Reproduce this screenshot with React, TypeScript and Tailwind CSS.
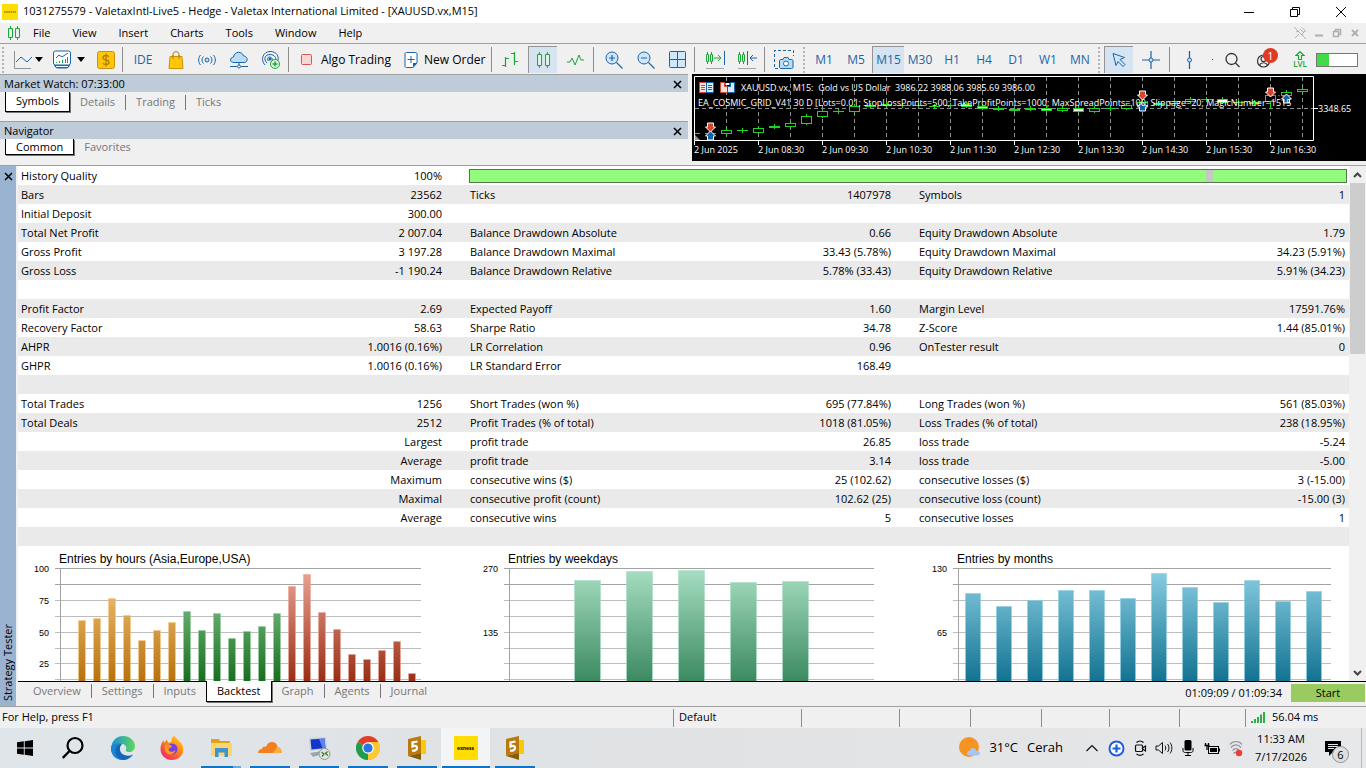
import { ReactNode } from "react";

type Row = [string, string, string, string, string, string];

const rows: Row[] = [
  ["Bars", "23562", "Ticks", "1407978", "Symbols", "1"],
  ["Initial Deposit", "300.00", "", "", "", ""],
  ["Total Net Profit", "2 007.04", "Balance Drawdown Absolute", "0.66", "Equity Drawdown Absolute", "1.79"],
  ["Gross Profit", "3 197.28", "Balance Drawdown Maximal", "33.43 (5.78%)", "Equity Drawdown Maximal", "34.23 (5.91%)"],
  ["Gross Loss", "-1 190.24", "Balance Drawdown Relative", "5.78% (33.43)", "Equity Drawdown Relative", "5.91% (34.23)"],
  ["", "", "", "", "", ""],
  ["Profit Factor", "2.69", "Expected Payoff", "1.60", "Margin Level", "17591.76%"],
  ["Recovery Factor", "58.63", "Sharpe Ratio", "34.78", "Z-Score", "1.44 (85.01%)"],
  ["AHPR", "1.0016 (0.16%)", "LR Correlation", "0.96", "OnTester result", "0"],
  ["GHPR", "1.0016 (0.16%)", "LR Standard Error", "168.49", "", ""],
  ["", "", "", "", "", ""],
  ["Total Trades", "1256", "Short Trades (won %)", "695 (77.84%)", "Long Trades (won %)", "561 (85.03%)"],
  ["Total Deals", "2512", "Profit Trades (% of total)", "1018 (81.05%)", "Loss Trades (% of total)", "238 (18.95%)"],
  ["", "Largest", "profit trade", "26.85", "loss trade", "-5.24"],
  ["", "Average", "profit trade", "3.14", "loss trade", "-5.00"],
  ["", "Maximum", "consecutive wins ($)", "25 (102.62)", "consecutive losses ($)", "3 (-15.00)"],
  ["", "Maximal", "consecutive profit (count)", "102.62 (25)", "consecutive loss (count)", "-15.00 (3)"],
  ["", "Average", "consecutive wins", "5", "consecutive losses", "1"],
  ["", "", "", "", "", ""],
];

const menus = ["File", "View", "Insert", "Charts", "Tools", "Window", "Help"];
const timeframes = ["M1", "M5", "M15", "M30", "H1", "H4", "D1", "W1", "MN"];
const testerTabs = ["Overview", "Settings", "Inputs", "Backtest", "Graph", "Agents", "Journal"];

const BLUE = "#1c65a5";
const GREEN = "#1ba636";

const Icon = ({ w = 20, h = 20, children }: { w?: number; h?: number; children: ReactNode }) => (
  <svg width={w} height={h} viewBox={`0 0 ${w} ${h}`} fill="none" className="shrink-0">
    {children}
  </svg>
);

const Sep = ({ className = "" }: { className?: string }) => (
  <span className={`h-[25px] w-px shrink-0 bg-[#8c8c8c] ${className}`} />
);

const Grip = ({ className = "" }: { className?: string }) => (
  <span className={`h-[26px] shrink-0 border-l-2 border-dotted border-[#b4b4b4] ${className}`} />
);

const Tool = ({
  label,
  className = "w-8",
  active = false,
  children,
}: {
  label: string;
  className?: string;
  active?: boolean;
  children: ReactNode;
}) => (
  <button
    aria-label={label}
    className={`flex h-[27px] shrink-0 items-center justify-center whitespace-nowrap ${
      active ? "border-l border-t border-[#949494] bg-[#d6e3f0]" : ""
    } ${className}`}
  >
    {children}
  </button>
);

const Caret = () => (
  <Icon w={8} h={5}>
    <path d="M0 0h8L4 5z" fill="#000" />
  </Icon>
);

const TitleBar = () => (
  <header className="flex h-[23px] shrink-0 items-center bg-white pl-[2px] pr-[2px]">
    <svg width="16" height="16" viewBox="0 0 16 16">
      <rect width="16" height="16" fill="#ffdd00" />
      <path d="M2 8h12" stroke="#5b5210" strokeWidth="1.2" strokeDasharray="1.6 .6" />
    </svg>
    <h1 className="ml-[5px] flex-1 text-[11px]">
      1031275579 - ValetaxIntl-Live5 - Hedge - Valetax International Limited - [XAUUSD.vx,M15]
    </h1>
    <button aria-label="Minimize" className="flex w-[46px] justify-center">
      <Icon w={10} h={10}>
        <path d="M0 5.5h10" stroke="#000" />
      </Icon>
    </button>
    <button aria-label="Restore" className="flex w-[46px] justify-center">
      <Icon w={10} h={10}>
        <path d="M.5 2.5h7v7h-7zM2.5 2.500v-2h7v7h-2" stroke="#000" />
      </Icon>
    </button>
    <button aria-label="Close" className="flex w-[46px] justify-center">
      <Icon w={10} h={10}>
        <path d="M0 0l10 10M10 0L0 10" stroke="#000" />
      </Icon>
    </button>
  </header>
);

const MenuBar = () => (
  <nav className="flex h-[21px] shrink-0 items-center border-b border-[#a0a0a0] pl-[7px] pr-[6px]">
    <Icon w={14} h={14}>
      <path d="M3.500 0v14M10.500 0v14" stroke={GREEN} />
      <path d="M1.500 2.500h4v9h-4zM8.500 2.500h4v9h-4z" fill="#e3f5e6" stroke={GREEN} />
    </Icon>
    <div className="flex pl-px">
      {menus.map((m) => (
        <button key={m} className="px-[11px] text-[11px]">
          {m}
        </button>
      ))}
    </div>
    <div className="ml-auto flex items-center gap-[8px]">
      <button aria-label="Unpin">
        <Icon w={12} h={12}>
          <path d="M0 0l12 12M1 11l4-4M6 2l4 4M8 .5L11.500 4 9.500 5 8 8M5 4L2 5" stroke="#b0b0b0" />
        </Icon>
      </button>
      <button aria-label="Minimize chart">
        <Icon w={10} h={12}>
          <path d="M1 8.500h8" stroke="#b0b0b0" strokeWidth="2" />
        </Icon>
      </button>
      <button aria-label="Restore chart">
        <Icon w={10} h={12}>
          <path d="M1.500 4.500h5v5h-5zM3.500 4V2.500h5v5H7" stroke="#b0b0b0" strokeWidth="1.500" />
        </Icon>
      </button>
      <button aria-label="Close chart">
        <Icon w={10} h={12}>
          <path d="M2 3l6 6M8 3L2 9" stroke="#b0b0b0" strokeWidth="2" />
        </Icon>
      </button>
    </div>
  </nav>
);

const Toolbar = () => (
  <div className="flex h-[30px] shrink-0 items-center overflow-hidden pt-px">
    <Grip className="ml-[2px] w-2" />
    <Tool label="Charts" className="w-6">
      <Icon>
        <path d="M2.500 1v17.500H19" stroke="#8d9499" />
        <path d="M4 12l5-5 6 5 5-5" stroke={BLUE} />
      </Icon>
    </Tool>
    <Tool label="Chart list" className="w-2.5">
      <Caret />
    </Tool>
    <Tool label="Indicators" className="ml-1 w-7">
      <Icon>
        <rect x="1.500" y="1" width="17" height="14" rx="2" stroke={BLUE} fill="#fff" />
        <path d="M4 8l3-3 3 2 6-4" stroke={BLUE} />
        <path d="M4.500 13v-1M7.500 13v-2M10.500 13v-3M13.500 13V9M15.500 13V7" stroke={GREEN} />
        <path d="M2 15c1 2 2 3.500 4 3.500h8c2 0 3-1.500 4-3.500z" fill={BLUE} />
        <path d="M4 16.500h12" stroke="#fff" />
      </Icon>
    </Tool>
    <Tool label="Indicator list" className="w-2.5">
      <Caret />
    </Tool>
    <Tool label="Symbols" className="ml-1 w-8">
      <Icon w={18} h={18}>
        <rect x=".5" y=".5" width="17" height="17" rx="2" fill="#ffc60a" stroke="#c9920a" />
        <path
          d="M12 6c-.5-1-1.500-1.500-3-1.500-4 0-4 4 0 4.500s4 4.500 0 4.500c-1.500 0-2.500-.5-3-1.500M9 2.500v13"
          stroke="#b67c00"
          strokeWidth="1.300"
        />
      </Icon>
    </Tool>
    <Sep />
    <Tool label="IDE" className="ml-[2px] w-9">
      <span className="text-[12px] text-[#1c65a5]">IDE</span>
    </Tool>
    <Tool label="Market" className="w-[30px]">
      <Icon w={16} h={18}>
        <path d="M5 7V3c0-3 6-3 6 0v4" stroke="#b67c00" />
        <path d="M2 5.500h12l1 12H1z" fill="#ffc60a" stroke="#c9920a" />
        <path d="M5 8V4M11 8V4" stroke="#b67c00" />
      </Icon>
    </Tool>
    <Tool label="Signals">
      <Icon w={18} h={14}>
        <circle cx="9" cy="7" r="2" fill="#bfe0f8" stroke={BLUE} />
        <path d="M5.500 3.500c-2 2-2 5 0 7M12.500 3.500c2 2 2 5 0 7M2.500 2c-2.500 3-2.500 7 0 10M15.500 2c2.500 3 2.500 7 0 10" stroke={BLUE} />
      </Icon>
    </Tool>
    <Tool label="VPS">
      <Icon w={18} h={18}>
        <path d="M4 11.500c-4.500 0-4.500-5-.5-5.500C4 0 12.500 0 13.500 5c4.500 0 5 6.500.5 6.500z" fill="#b9ddf7" stroke={BLUE} />
        <path d="M9 12v3M0 15.500h7M11 15.500h7" stroke={BLUE} />
        <circle cx="9" cy="15.500" r="1.500" fill="#fff" stroke={BLUE} />
      </Icon>
    </Tool>
    <Tool label="Copy trading">
      <Icon w={20} h={20}>
        <path d="M4 15C-1 10 2 1.500 9 1.500s9 5 8 9M6 13C2 9 4 4.500 9 4.500s6.500 4 5.500 6M7.500 11C5 8 8 6 10 7.500s2 3 0 4" stroke={BLUE} />
        <circle cx="9" cy="9" r="1.500" fill={BLUE} />
        <circle cx="14" cy="14" r="4.500" fill="#dff6e3" stroke={GREEN} />
        <path d="M11.500 14h5M14 11.500v5" stroke={GREEN} strokeWidth="1.400" />
      </Icon>
    </Tool>
    <Sep className="ml-[1px]" />
    <Tool label="Algo Trading" className="w-[103px] pl-3">
      <span className="flex flex-1 items-center gap-2 text-[12px]">
        <Icon w={12} h={12}>
          <rect x=".5" y=".5" width="10" height="10" rx="1" fill="#fcd6d0" stroke="#cf5b4e" />
        </Icon>
        Algo Trading
      </span>
    </Tool>
    <Tool label="New Order" className="w-[99px] pl-3">
      <span className="flex flex-1 items-center gap-[6px] text-[12px]">
        <Icon w={14} h={18}>
          <path d="M2.500 1.500h9c1 0 1.500.5 1.500 1.500v9l-4 4.500H2.500C1.500 16.500 1 16 1 15V3c0-1 .5-1.500 1.500-1.500z" fill="#fff" stroke={BLUE} />
          <path d="M3.500 8.500h7M7 5v7" stroke={BLUE} />
          <path d="M13 12l-4 4.500V12z" fill={BLUE} />
        </Icon>
        New Order
      </span>
    </Tool>
    <Sep />
    <Tool label="Bar chart" className="w-9">
      <Icon w={18} h={18}>
        <path d="M4.500 6v10M1 14.500h3.500M4.500 7.500H8M13.500 1v13M10 2.500h3.500M13.500 10.500H17" stroke={GREEN} strokeWidth="1.200" />
      </Icon>
    </Tool>
    <Tool label="Candlesticks" className="w-[29px]" active>
      <Icon w={16} h={18}>
        <path d="M4.500 1v16M12.500 1v16" stroke={GREEN} />
        <path d="M2.500 3.500h4v11h-4zM10.500 3.500h4v11h-4z" fill="#dff3e3" stroke={GREEN} />
      </Icon>
    </Tool>
    <Tool label="Line chart" className="w-9">
      <Icon w={18} h={14}>
        <path d="M1 9h3l2-4 3 7 4-10 2 5h3" stroke={GREEN} />
      </Icon>
    </Tool>
    <Sep />
    <Tool label="Zoom in" className="ml-1 w-8">
      <Icon w={18} h={18}>
        <circle cx="7" cy="7" r="6" fill="#cfe6fa" stroke={BLUE} />
        <path d="M4 7h6M7 4v6M11.500 11.500l6 6" stroke={BLUE} strokeWidth="1.200" />
      </Icon>
    </Tool>
    <Tool label="Zoom out">
      <Icon w={18} h={18}>
        <circle cx="7" cy="7" r="6" fill="#cfe6fa" stroke={BLUE} />
        <path d="M4 7h6M11.500 11.500l6 6" stroke={BLUE} strokeWidth="1.200" />
      </Icon>
    </Tool>
    <Tool label="Tile windows">
      <Icon w={18} h={18}>
        <rect x=".5" y=".5" width="16" height="16" rx="1" fill="#cfe9fb" stroke={BLUE} />
        <path d="M8.500 0v17M0 8.500h17" stroke={BLUE} />
      </Icon>
    </Tool>
    <Sep />
    <Tool label="Auto scroll" className="ml-1 w-8">
      <Icon w={20} h={18}>
        <path d="M2.500 1v12M6.500 1v12" stroke={GREEN} />
        <path d="M1.500 3.500h2v7h-2zM5.500 3.500h2v7h-2z" fill="#dff3e3" stroke={GREEN} />
        <path d="M9 7h7M13 4l3 3-3 3" stroke={GREEN} />
        <path d="M19.500 0v14" stroke={BLUE} />
        <path d="M1 17.500h18" stroke="#a5a5a5" />
      </Icon>
    </Tool>
    <Tool label="Chart shift">
      <Icon w={20} h={18}>
        <path d="M2.500 1v12M6.500 1v12" stroke={GREEN} />
        <path d="M1.500 3.500h2v7h-2zM5.500 3.500h2v7h-2z" fill="#dff3e3" stroke={GREEN} />
        <path d="M10.500 0v14M20 7h-7M16 4l-3 3 3 3" stroke={BLUE} />
        <path d="M1 17.500h18" stroke="#a5a5a5" />
      </Icon>
    </Tool>
    <Sep className="ml-[1px]" />
    <Tool label="Screenshot" className="w-[38px]">
      <Icon w={20} h={20}>
        <path d="M4 18.500H.5V.5h19V6" stroke={BLUE} strokeDasharray="3 2" />
        <path d="M7 9.500h2l1-2h4l1 2h2.500c1 0 1.500.5 1.500 1.500v6c0 1-.5 1.500-1.500 1.500H7c-1 0-1.500-.5-1.500-1.500v-6c0-1 .5-1.500 1.500-1.500z" fill="#b9ddf7" stroke={BLUE} />
        <circle cx="12" cy="13.500" r="2.500" fill="#fff" stroke={BLUE} />
      </Icon>
    </Tool>
    <Grip className="w-[5px]" />
    {timeframes.map((tf) => (
      <Tool key={tf} label={tf} active={tf === "M15"}>
        <span className="text-[12px] text-[#1c65a5]">{tf}</span>
      </Tool>
    ))}
    <Grip className="ml-[2px] w-[6px]" />
    <Tool label="Cursor" className="w-[29px]" active>
      <Icon w={16} h={16}>
        <path d="M2 1.500l11.500 4-4.500 2 5 5-2 2-5-5-2 4z" fill="#cfe6fa" stroke={BLUE} />
      </Icon>
    </Tool>
    <Tool label="Crosshair" className="w-9">
      <Icon w={18} h={18}>
        <path d="M0 9h7M11 9h7M9 0v7M9 11v7" stroke={BLUE} strokeWidth="1.200" />
        <circle cx="9" cy="9" r="2" fill="#cfe6fa" stroke={BLUE} />
      </Icon>
    </Tool>
    <Sep />
    <Tool label="Vertical line" className="w-[38px]">
      <Icon w={7} h={18}>
        <path d="M3.500 0v18" stroke={BLUE} strokeWidth="1.300" />
        <circle cx="3.500" cy="9" r="2" fill="#cfe6fa" stroke={BLUE} />
      </Icon>
    </Tool>
    <span className="ml-1 size-px bg-[#444]" />
    <div className="ml-auto flex items-center pr-2">
      <Tool label="Search">
        <Icon w={16} h={16}>
          <circle cx="7.500" cy="7" r="5.500" stroke="#333" strokeWidth="1.300" />
          <path d="M11.500 11l4 4" stroke="#333" strokeWidth="1.300" />
        </Icon>
      </Tool>
      <Tool label="Account" className="relative w-9">
        <Icon w={20} h={20}>
          <circle cx="7.500" cy="11" r="6" stroke="#333" strokeWidth="1.200" />
          <circle cx="7.500" cy="9" r="2.500" stroke="#333" strokeWidth="1.200" />
          <path d="M3.500 15c1.500-3 6.500-3 8 0" stroke="#333" strokeWidth="1.200" />
        </Icon>
        <span className="absolute right-[6px] top-[2px] size-[15px] rounded-full bg-[#e03a24] text-center text-[11px] leading-[15px] text-white">
          1
        </span>
      </Tool>
      <Tool label="Level">
        <span className="flex flex-col items-center text-[8px] font-semibold leading-[8px] text-[#1ba636]">
          <Icon w={10} h={9}>
            <path d="M5 .700l4 3.800H6.500V8.500h-3V4.500H1z" stroke={GREEN} strokeWidth="1.200" />
          </Icon>
          LVL
        </span>
      </Tool>
      <div className="h-[14px] w-[42px] border border-[#777] bg-white">
        <div className="h-full w-[12px] bg-[#3fdc48]" />
      </div>
    </div>
  </div>
);

const Dock = ({
  title,
  tabs,
  className,
  tabClassName,
}: {
  title: string;
  tabs: string[];
  className: string;
  tabClassName: string;
}) => (
  <section className="border-t border-[#a0a0a0]">
    <div className="flex h-[17px] items-center justify-between bg-[#becbd9] pl-1 pr-[6px] pt-px text-[11px]">
      <h2>{title}</h2>
      <button aria-label={`Close ${title}`}>
        <Icon w={9} h={9}>
          <path d="M1 1l7 7M8 1L1 8" stroke="#000" strokeWidth="1.500" />
        </Icon>
      </button>
    </div>
    <div className={`flex items-start pl-[5px] text-[11px] ${className}`}>
      {tabs.map((tab, i) =>
        i === 0 ? (
          <button
            key={tab}
            className={`border-x border-b border-black bg-white px-[10px] shadow-[1px_1px_0_#777] ${tabClassName}`}
          >
            {tab}
          </button>
        ) : (
          <button key={tab} className={`flex items-center text-[#777] ${tabClassName}`}>
            {i > 1 && <span className="h-[15px] w-px bg-[#777]" />}
            <span className="px-[10px]">{tab}</span>
          </button>
        )
      )}
    </div>
  </section>
);

// x is the candle centre; kind: d = doji, b = hollow body, w = white body, f = filled
const candles: [number, string, number, number][] = [
  [710, "d", 133, 134], [726, "b", 130, 133], [742, "d", 130, 131], [758, "b", 128, 132],
  [774, "f", 126, 127], [790, "b", 123, 126], [806, "b", 116, 123], [822, "b", 111, 116],
  [838, "d", 111, 112], [854, "b", 106, 111], [870, "f", 105, 106], [886, "f", 104, 105],
  [902, "d", 105, 106], [918, "d", 105, 106], [934, "d", 106, 107], [950, "d", 105, 106],
  [966, "w", 104, 106], [982, "w", 106, 108], [998, "f", 108, 109], [1014, "f", 109, 110],
  [1030, "f", 108, 109], [1046, "w", 108, 110], [1062, "b", 108, 110], [1078, "w", 108, 111],
  [1094, "b", 108, 111], [1110, "d", 108, 109], [1126, "b", 105, 108], [1142, "b", 102, 105],
  [1158, "f", 103, 104], [1174, "b", 101, 103], [1190, "b", 99, 101], [1206, "d", 99, 100],
  [1222, "w", 99, 102], [1238, "d", 102, 103], [1254, "f", 102, 103], [1270, "b", 95, 101],
  [1286, "b", 92, 95], [1302, "b", 89, 91],
];

const chartTimes = ["2025", "08:30", "09:30", "10:30", "11:30", "12:30", "13:30", "14:30", "15:30", "16:30"];

const Arrow = ({ x, y, up = false }: { x: number; y: number; up?: boolean }) => (
  <path
    d={
      up
        ? `M${x} ${y - 5}l5 5h-2v4h-6v-4h-2z`
        : `M${x} ${y + 5}l5-5h-2v-4h-6v4h-2z`
    }
    fill={up ? "#1261ab" : "#d8432a"}
    stroke="#fff"
    strokeWidth="1"
  />
);

const PriceChart = () => (
  <svg width="674" height="87" viewBox="692 74 674 87" className="block">
    <rect x="692" y="74" width="674" height="87" fill="#000" />
    {Array.from({ length: 19 }, (_, i) => (
      <path key={i} d={`M${726.5 + i * 32} 77v63`} stroke="#8a8f94" strokeDasharray="4 3" />
    ))}
    <path d="M695 108.500h618" stroke="#8a8f94" strokeDasharray="4 3" />
    <path d="M695 133.500h5" stroke="#1fe01f" />
    <path d="M695 135l5 5h-5z" fill="#8a8f94" />
    {candles.map(([x, kind, top, bottom]) => (
      <g key={x} stroke="#1fd41f">
        <path d={`M${x + 0.5} ${top - 2}V${bottom + 2}`} />
        {kind === "d" ? (
          <path d={`M${x - 5} ${top + 0.5}h11`} />
        ) : (
          <rect
            x={x - 4.5}
            y={top + 0.5}
            width="10"
            height={bottom - top}
            fill={kind === "w" ? "#fff" : kind === "f" ? "#1fe01f" : "#000"}
          />
        )}
      </g>
    ))}
    <path d="M1270.500 101v8" stroke="#1fd41f" />
    <path d="M1274 95l14 2" stroke="#d8432a" strokeDasharray="2 2" />
    <Arrow x={710.5} y={127} />
    <Arrow x={710.5} y={136} up />
    <Arrow x={1142.5} y={95} />
    <Arrow x={1142.5} y={107} up />
    <Arrow x={1270.5} y={92} />
    <Arrow x={1286.5} y={99} up />
    <path d="M694.500 76.500h619v64h-619zM1314 108.500h4" stroke="#fff" fill="none" />
    <g>
      <rect x="699.500" y="82.500" width="7" height="10" fill="#fde0dc" stroke="#d8432a" />
      <rect x="706.500" y="82.500" width="7" height="10" fill="#d7ebfb" stroke="#1261ab" />
      <path d="M701 85.500h4M701 87.500h4M701 89.500h4" stroke="#d8432a" />
      <path d="M708 85.500h4M708 87.500h4M708 89.500h4" stroke="#1261ab" />
      <path d="M720.500 82.500h4v4h3v6h-7z" fill="#fde0dc" stroke="#d8432a" />
      <path d="M734.500 82.500h-4v4h-3v6h7z" fill="#d7ebfb" stroke="#1261ab" />
      <path d="M725.500 83h4v2h-4z" fill="#fff" />
    </g>
    <g fill="#fff" fontSize="9">
      <text x="741" y="91">
        XAUUSD.vx, M15:&nbsp; Gold vs US Dollar&nbsp; 3986.22 3988.06 3985.69 3986.00
      </text>
      <text x="698" y="106">
        EA_COSMIC_GRID_V41 30 D [Lots=0.01; StopLossPoints=500; TakeProfitPoints=1000; MaxSpreadPoints=100; Slippage=20; MagicNumber=1515
      </text>
      <text x="1318" y="112">
        3348.65
      </text>
      {chartTimes.map((t, i) => (
        <g key={t}>
          <path d={`M${694.5 + i * 64} 141v4`} stroke="#fff" />
          <text x={694 + i * 64} y="153">
            2 Jun {t}
          </text>
        </g>
      ))}
    </g>
  </svg>
);

type Series = { id: string; from: string; to: string; tops: number[] };

// tops are the y of each bar inside the 135px high plot
const BarChart = ({
  title,
  labels,
  right,
  start,
  step,
  width,
  series,
}: {
  title: string;
  labels: [string, number][];
  right: number;
  start: number;
  step: number;
  width: number;
  series: Series[];
}) => {
  let index = 0;
  return (
    <svg width="430" height="135" viewBox="0 0 430 135" className="block shrink-0" fontFamily="'Liberation Sans', sans-serif">
      <defs>
        {series.map((s) => (
          <linearGradient key={s.id} id={s.id} gradientUnits="userSpaceOnUse" x1="0" y1="22" x2="0" y2="140">
            <stop offset="0" stopColor={s.from} />
            <stop offset="1" stopColor={s.to} />
          </linearGradient>
        ))}
      </defs>
      {Array.from({ length: 8 }, (_, i) => (
        <path key={i} d={`M37 ${22.5 + i * 16 - (i > 5 ? 1 : 0)}H${right}`} stroke={i < 2 ? "#a3a3a3" : "#bdbdbd"} />
      ))}
      <path d="M42.500 22v113" stroke="#a3a3a3" />
      <text x="41" y="17" fontSize="12">
        {title}
      </text>
      {labels.map(([text, y]) => (
        <text key={text} x="31" y={y} fontSize="9" textAnchor="end">
          {text}
        </text>
      ))}
      {series.map((s) =>
        s.tops.map((top) => {
          const x = start + index++ * step;
          return (
            <rect
              key={x}
              x={x + 0.5}
              y={top + 0.5}
              width={width - 1}
              height={140 - top}
              fill={`url(#${s.id})`}
              stroke={s.from}
              strokeOpacity="0.6"
            />
          );
        })
      )}
    </svg>
  );
};

const Report = () => (
  <div className="min-w-0 flex-1 overflow-hidden bg-white">
    <table className="w-full table-fixed border-collapse text-[11px] leading-[19px]">
      <colgroup>
        <col className="w-[210px]" />
        <col className="w-[239px]" />
        <col className="w-[210px]" />
        <col className="w-[239px]" />
        <col className="w-[210px]" />
        <col />
      </colgroup>
      <tbody>
        <tr className="h-[19px]">
          <th scope="row" className="p-0 pl-[3px] text-left font-normal">
            History Quality
          </th>
          <td className="p-0 pr-[25px] text-right">100%</td>
          <td colSpan={4} className="p-0 pl-[2px] pr-[2px]">
            <div className="flex h-[14px] border border-[#4f7a48] bg-[#92fd7c]">
              <span className="w-[84%]" />
              <span className="w-[7px] bg-[#c5c8c0]" />
            </div>
          </td>
        </tr>
        {rows.map((r, i) => (
          <tr key={i} className={i % 2 === 0 ? "h-[19px] bg-[#eaeaea]" : "h-[19px]"}>
            <th scope="row" className="p-0 pl-[3px] text-left font-normal">
              {r[0]}
            </th>
            <td className="p-0 pr-[25px] text-right">{r[1]}</td>
            <td className="p-0 pl-[3px]">{r[2]}</td>
            <td className="p-0 pr-[25px] text-right">{r[3]}</td>
            <td className="p-0 pl-[3px]">{r[4]}</td>
            <td className="p-0 pr-1 text-right">{r[5]}</td>
          </tr>
        ))}
      </tbody>
    </table>
    <div className="flex gap-[19px]">
      <BarChart
        title="Entries by hours (Asia,Europe,USA)"
        labels={[["100", 26], ["75", 58], ["50", 90], ["25", 121]]}
        right={403}
        start={60}
        step={15}
        width={8}
        series={[
          { id: "asia", from: "#f6cb86", to: "#b56d08", tops: [74, 72, 52, 69, 94, 84, 76] },
          { id: "europe", from: "#93d29c", to: "#136a1a", tops: [65, 84, 67, 92, 85, 80, 67] },
          { id: "usa", from: "#eca698", to: "#96290f", tops: [40, 28, 66, 83, 108, 113, 104, 95, 127] },
        ]}
      />
      <BarChart
        title="Entries by weekdays"
        labels={[["270", 26], ["135", 90]]}
        right={407}
        start={107}
        step={52}
        width={27}
        series={[{ id: "week", from: "#a8dfc4", to: "#37865c", tops: [34, 25, 24, 36, 35] }]}
      />
      <BarChart
        title="Entries by months"
        labels={[["130", 26], ["65", 90]]}
        right={415}
        start={49}
        step={31}
        width={16}
        series={[
          { id: "month", from: "#8ccfe4", to: "#0d6f8e", tops: [47, 60, 54, 44, 44, 52, 27, 41, 56, 34, 55, 45] },
        ]}
      />
    </div>
  </div>
);

const Tester = () => (
  <main className="flex min-h-0 flex-1 border-t border-[#a0a0a0]">
    <aside className="flex w-4 shrink-0 flex-col items-center justify-between bg-[#9ab3d1] pb-[5px] pt-[6px]">
      <button aria-label="Close tester">
        <Icon w={9} h={9}>
          <path d="M1 1l7 7M8 1L1 8" stroke="#000" strokeWidth="1.500" />
        </Icon>
      </button>
      <h2 className="rotate-180 text-[11px] leading-4 [writing-mode:vertical-rl]">Strategy Tester</h2>
    </aside>
    <div className="flex min-w-0 flex-1 flex-col">
      <div className="flex min-h-0 flex-1 pl-[2px]">
        <Report />
        <div className="flex w-[17px] shrink-0 flex-col items-center bg-[#f0f0f0] pr-px">
          <button aria-label="Scroll up" className="flex h-[17px] items-center">
            <Icon w={9} h={6}>
              <path d="M1 5l3.500-3.500L8 5" stroke="#444" strokeWidth="2" />
            </Icon>
          </button>
          <div className="h-[171px] w-[15px] bg-[#cdcdcd]" />
          <button aria-label="Scroll down" className="mt-auto flex h-[17px] items-center">
            <Icon w={9} h={6}>
              <path d="M1 1l3.500 3.500L8 1" stroke="#444" strokeWidth="2" />
            </Icon>
          </button>
        </div>
      </div>
      <div className="ml-[2px] flex h-[25px] shrink-0 items-start border-t border-black text-[11px]">
        <div className="flex h-5 items-start pl-[5px]">
          {testerTabs.map((tab, i) =>
            tab === "Backtest" ? (
              <button
                key={tab}
                className="-mt-px h-[21px] border-x border-b border-black bg-white px-[10px] shadow-[1px_1px_0_#777]"
              >
                {tab}
              </button>
            ) : (
              <button key={tab} className="flex h-[18px] items-center text-[#777]">
                {i !== 0 && i !== 4 && <span className="h-[14px] w-px bg-[#777]" />}
                <span className="px-[10px]">{tab}</span>
              </button>
            )
          )}
        </div>
        <span className="ml-auto mr-[9px] leading-[22px]">01:09:09 / 01:09:34</span>
        <button className="mr-px mt-[2px] h-[18px] w-[74px] bg-[#9acb60] leading-[18px]">Start</button>
      </div>
    </div>
  </main>
);

const StatusBar = () => (
  <footer className="flex h-[22px] shrink-0 items-center border-t border-[#a0a0a0] text-[11px]">
    <span className="flex-1 pl-[2px]">For Help, press F1</span>
    <span className="h-[18px] w-[128px] border-l border-[#8c8c8c] pl-[5px]">Default</span>
    <span className="h-[18px] w-[98px] border-l border-[#8c8c8c]" />
    <span className="h-[18px] w-[71px] border-l border-[#8c8c8c]" />
    <span className="h-[18px] w-[71px] border-l border-[#8c8c8c]" />
    <span className="h-[18px] w-[68px] border-l border-[#8c8c8c]" />
    <span className="h-[18px] w-[70px] border-l border-[#8c8c8c]" />
    <span className="h-[18px] w-[66px] border-l border-[#8c8c8c]" />
    <span className="flex h-[18px] w-[121px] items-center gap-[6px] border-l border-[#8c8c8c] pl-[5px]">
      <Icon w={15} h={11}>
        <path d="M1 11V9M4 11V7M7 11V5M10 11V2.500M13 11V0" stroke={GREEN} strokeWidth="1.800" />
      </Icon>
      56.04 ms
    </span>
  </footer>
);

const SublimeIcon = () => (
  <Icon w={24} h={26}>
    <path d="M12 5h9v14h-9z" fill="#f8c80a" />
    <path d="M3 4l13-3v17L3 21z" fill="#b97a10" />
    <path d="M3 21l13-3v7z" fill="#8c5a0a" />
    <path d="M12.500 6.500l-5 1v4c2-1 4.500-1 4.500 1.500s-3 3-5 2.500" stroke="#fff" strokeWidth="2.200" />
  </Icon>
);

const apps: { name: string; state: string; icon: ReactNode }[] = [
  {
    name: "Start",
    state: "idle",
    icon: (
      <Icon w={16} h={16}>
        <path d="M0 2.300l6.800-1v6.200H0zM7.700 1.200L16 0v7.500H7.700zM0 8.400h6.800v6.300L0 13.700zM7.700 8.400H16V16l-8.300-1.200z" fill="#000" />
      </Icon>
    ),
  },
  {
    name: "Search",
    state: "idle",
    icon: (
      <Icon w={24} h={24}>
        <circle cx="13" cy="9.500" r="7.500" stroke="#000" strokeWidth="2.200" />
        <path d="M7.500 15L.8 22" stroke="#000" strokeWidth="2.400" />
      </Icon>
    ),
  },
  {
    name: "Edge",
    state: "idle",
    icon: (
      <Icon w={24} h={24}>
        <defs>
          <linearGradient id="edgeTop" x1="0" y1="0" x2="1" y2="0">
            <stop offset="0" stopColor="#1b8fd8" />
            <stop offset="1" stopColor="#5fd65a" />
          </linearGradient>
        </defs>
        <path d="M0 12C1 4 6 0 12 0c7 0 12 5 12 10 0 4-3 6-6 6-2.500 0-4-1-3-2.500 1-2-.5-5.500-4-5.500C6 8 2 10 0 12z" fill="url(#edgeTop)" />
        <path d="M0 12c0 7 5 12 12 12 4 0 8-2 10-5.500-5 2.500-12 1-13-4.500C8.500 11 10 9 11 8 6 7 1 9 0 12z" fill="#1467b8" />
        <path d="M0 12c0 7 5 12 12 12-5-1-8-5-7.500-10C5 10 8 8 11 8 6 6.500 1 8 0 12z" fill="#1c86d4" />
      </Icon>
    ),
  },
  {
    name: "Firefox",
    state: "idle",
    icon: (
      <Icon w={24} h={24}>
        <defs>
          <linearGradient id="fox" x1="1" y1="0" x2="0.200" y2="1">
            <stop offset="0" stopColor="#ffe226" />
            <stop offset="0.450" stopColor="#ff8a16" />
            <stop offset="1" stopColor="#f0246e" />
          </linearGradient>
        </defs>
        <path d="M14 0c3 2 4 4 5 5 3 2 4.500 5 4.300 9C23 20 18 24 12 24 5 24 .500 19 .500 13 .500 9 2 6 3.500 4l.5 3 3-3.500 1 3c2 0 3-.5 4-1.500C11 3 12 1 14 0z" fill="url(#fox)" />
        <circle cx="12" cy="13" r="5.500" fill="#7a3fe0" />
        <path d="M5 9c3-1 5 0 7 1-1 2-3 2-3.500 3.500.5 3 5 3 7 .5-1 5-7 6-9.500 2C4.500 14 4.500 11 5 9z" fill="#ff9a1a" />
      </Icon>
    ),
  },
  {
    name: "File Explorer",
    state: "grouped",
    icon: (
      <Icon w={24} h={22}>
        <path d="M2 2h8l1 2h10v5H2z" fill="#e0a21c" />
        <path d="M2 6h21v13H2z" fill="#fcd66b" />
        <path d="M6 11h13v9h-3.500v-4.500h-6V20H6z" fill="#3a94d6" />
      </Icon>
    ),
  },
  {
    name: "Cloudflare WARP",
    state: "open",
    icon: (
      <Icon w={26} h={14}>
        <path d="M1 12c0-2.500 2-4 4-4C5.500 5 8 5 9 6c1-4 4-5.500 7-5 3 .5 4.500 3 4.500 5L18 12z" fill="#f38020" />
        <path d="M20 6c3-.5 5 2 5 6h-9l2-2.500z" fill="#faad3f" />
      </Icon>
    ),
  },
  {
    name: "Remote Desktop",
    state: "open",
    icon: (
      <Icon w={24} h={24}>
        <path d="M2 2l17-1 1 12-17 2z" fill="#c9d3dc" />
        <path d="M3.500 3.500l14-1 1 9.500-14 1.500z" fill="#1534c9" />
        <path d="M12 2.800l5.500-.3 1 9.500-3 .3z" fill="#5d84f0" />
        <path d="M3 17l12-2 3 2-12 4z" fill="#9aa7b2" />
        <circle cx="17.500" cy="18" r="5.500" fill="#dfe5dc" stroke="#8f9a8c" />
        <path d="M14.500 16l2.500 2-2 2.500M20.500 15.500l-2 2 2.500 2" stroke="#3d7a3d" strokeWidth="1.300" />
      </Icon>
    ),
  },
  {
    name: "Chrome",
    state: "open",
    icon: (
      <Icon w={24} h={24}>
        <path d="M12 12L1.600 6A12 12 0 0 1 22.400 6z" fill="#e33b2e" />
        <path d="M12 12l10.400-6A12 12 0 0 1 12 24z" fill="#fcc934" />
        <path d="M12 12v12A12 12 0 0 1 1.600 6z" fill="#1e9e4a" />
        <path d="M12 6h10.400A12 12 0 0 1 12 24l5.200-9z" fill="#fcc934" />
        <circle cx="12" cy="12" r="5.800" fill="#fff" />
        <circle cx="12" cy="12" r="4.600" fill="#2a74e8" />
      </Icon>
    ),
  },
  { name: "Sublime Text", state: "open", icon: <SublimeIcon /> },
  {
    name: "Exness",
    state: "active",
    icon: (
      <span className="flex size-6 items-center justify-center bg-[#ffdd00] text-[5px] font-bold leading-none">exness</span>
    ),
  },
  { name: "Sublime Text 2", state: "open", icon: <SublimeIcon /> },
];

const underline: Record<string, string> = {
  idle: "hidden",
  open: "w-10 bg-[#0f74c8]",
  grouped: "w-10 border-r-8 border-[#6fa8dc] bg-[#0f74c8]",
  active: "w-12 bg-[#0f74c8]",
};

const Taskbar = () => (
  <div className="flex h-10 shrink-0 items-center bg-linear-to-r from-[#dfe5ea] via-[#e0e2e4] to-[#e6e8ea]">
    {apps.map((app) => (
      <button
        key={app.name}
        aria-label={app.name}
        className={`relative flex h-10 w-[49px] shrink-0 items-center justify-center ${
          app.state === "active" ? "bg-[#f3f4f5]" : ""
        }`}
      >
        {app.icon}
        <span className={`absolute bottom-0 h-[2px] ${underline[app.state]}`} />
      </button>
    ))}
    <button className="ml-auto flex items-center gap-[9px] text-[13px]">
      <Icon w={22} h={22}>
        <circle cx="11" cy="10" r="10" fill="#f59422" />
        <path d="M11.500 18.500c-3.500 0-3.500-4.500 0-4.500 1-4 6-4 7 0 4.500-.5 4.500 4.500.5 4.500z" fill="#a9c5f2" />
      </Icon>
      <span>31°C</span>
      <span>Cerah</span>
    </button>
    <div className="ml-[17px] flex items-center">
      <button aria-label="Show hidden icons" className="flex w-6 justify-center">
        <Icon w={12} h={8}>
          <path d="M.5 7L6 1.500 11.500 7" stroke="#111" strokeWidth="1.200" />
        </Icon>
      </button>
      <button aria-label="Security" className="flex w-6 justify-center">
        <Icon w={17} h={17}>
          <circle cx="8.500" cy="8.500" r="7" fill="#fff" stroke="#1d5fe0" strokeWidth="2" />
          <path d="M8.500 4.500v8M4.500 8.500h8" stroke="#1d5fe0" strokeWidth="2.200" />
        </Icon>
      </button>
      <button aria-label="Meet now" className="flex w-6 justify-center">
        <Icon w={13} h={16}>
          <rect x="1.500" y="5" width="7" height="6.500" rx="1" stroke="#111" strokeWidth="1.200" />
          <path d="M8.500 8l3-2v5l-3-2M2.500 2.500c2-2 5-2 7 0M2.500 14c2 1.500 5 1.500 7 0" stroke="#111" strokeWidth="1.200" />
        </Icon>
      </button>
      <button aria-label="Volume" className="flex w-6 justify-center">
        <Icon w={18} h={14}>
          <path d="M1 5h2.500l4-3.500v11L3.500 9H1z" stroke="#111" />
          <path d="M10 4.500c1 1.500 1 3.500 0 5M12.500 3c2 2.500 2 5.500 0 8M15 1.500c2.500 3 2.500 8 0 11" stroke="#111" />
        </Icon>
      </button>
      <button aria-label="Microphone" className="flex w-6 justify-center">
        <Icon w={12} h={16}>
          <rect x="2.500" y="0" width="7" height="10.500" rx="1.500" fill="#000" />
          <path d="M1 8v2.500c0 1.500 1 2 2.500 2h5c1.500 0 2.500-.5 2.500-2V8M6 12.500V16M3 15.500h6" stroke="#000" />
        </Icon>
      </button>
      <button aria-label="Battery" className="flex w-6 justify-center">
        <Icon w={16} h={13}>
          <rect x="4.500" y="4.500" width="10" height="7" stroke="#000" />
          <path d="M6 6h7v4H6zM15 6.500h1v3h-1z" fill="#000" />
          <path d="M1.500 1v2.500M4.500 1v2.500M.5 3.500h5M3 4v4" stroke="#000" strokeWidth="1.300" />
        </Icon>
      </button>
      <button aria-label="Network" className="flex w-6 justify-center">
        <Icon w={14} h={17}>
          <path d="M1 4.500c3-4 9-4 12 0M2 7.500c3-3.500 7-3.500 10 0M3.500 10.500c2-2.500 5-2.500 7 0M4.500 13.500c1-1.500 3-1.500 4 0" stroke="#8a929c" strokeWidth="1.200" />
          <circle cx="10" cy="13" r="3.200" fill="#f03c36" />
        </Icon>
      </button>
    </div>
    <button className="w-[66px] text-center text-[11px] leading-[18px]">
      11:33 AM
      <br />
      7/17/2026
    </button>
    <button aria-label="Notifications" className="relative flex h-10 w-12 items-center border-r border-[#b4b7ba] pl-[11px]">
      <Icon w={16} h={16}>
        <path d="M0 1h16v11h-8l-4 4v-4H0z" fill="#000" />
        <path d="M3 4.500h10M3 6.500h10M3 8.500h6" stroke="#e6e8ea" />
      </Icon>
      <span className="absolute bottom-[5px] right-[12px] size-[17px] rounded-full border border-[#8f9396] bg-[#dddfe1] text-center text-[11px] leading-[15px]">
        6
      </span>
    </button>
    <span className="w-[4px]" />
  </div>
);

const App = () => {
  return (
    <div className="flex h-screen flex-col overflow-hidden bg-[#f0f0f0] font-['Open_Sans',sans-serif] text-black">
      <TitleBar />
      <MenuBar />
      <Toolbar />
      <div className="flex shrink-0 items-start">
        <div className="mr-1 flex-1">
          <Dock
            title="Market Watch: 07:33:00"
            tabs={["Symbols", "Details", "Trading", "Ticks"]}
            className="h-[29px]"
            tabClassName="h-5"
          />
          <Dock title="Navigator" tabs={["Common", "Favorites"]} className="h-[26px]" tabClassName="h-4 leading-[14px]" />
        </div>
        <PriceChart />
      </div>
      <Tester />
      <StatusBar />
      <Taskbar />
    </div>
  );
};

export default App;
